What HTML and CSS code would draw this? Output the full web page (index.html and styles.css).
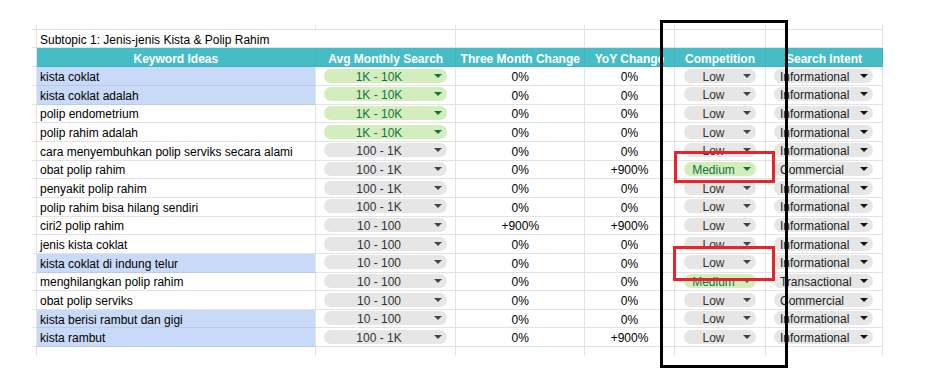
FILE: index.html
```html
<!DOCTYPE html>
<html>
<head>
<meta charset="utf-8">
<link rel="stylesheet" href="styles.css">
</head>
<body>
<div class="page">
  <div class="sheet">
    <div class="row top"><div class="c a"></div><div class="c b"></div><div class="c"></div><div class="c"></div><div class="c"></div><div class="c"></div><div class="c"></div></div>
    <div class="row sub"><div class="c a"></div><div class="c b nob">Subtopic 1: Jenis-jenis Kista &amp; Polip Rahim</div><div class="c"></div><div class="c"></div><div class="c"></div><div class="c"></div><div class="c"></div></div>
    <div class="row head"><div class="c a"></div><div class="c h">Keyword Ideas</div><div class="c h">Avg Monthly Search</div><div class="c h">Three Month Change</div><div class="c h">YoY Change</div><div class="c h">Competition</div><div class="c h">Search Intent</div></div>

    <div class="row d"><div class="c a"></div><div class="c b hl">kista coklat</div><div class="c"><span class="chip g vol"><span class="t">1K - 10K</span><i></i></span></div><div class="c n">0%</div><div class="c n">0%</div><div class="c"><span class="chip comp"><span class="t">Low</span><i></i></span></div><div class="c"><span class="chip intent"><span class="t">Informational</span><i></i></span></div></div>
    <div class="row d"><div class="c a"></div><div class="c b hl">kista coklat adalah</div><div class="c"><span class="chip g vol"><span class="t">1K - 10K</span><i></i></span></div><div class="c n">0%</div><div class="c n">0%</div><div class="c"><span class="chip comp"><span class="t">Low</span><i></i></span></div><div class="c"><span class="chip intent"><span class="t">Informational</span><i></i></span></div></div>
    <div class="row d"><div class="c a"></div><div class="c b">polip endometrium</div><div class="c"><span class="chip g vol"><span class="t">1K - 10K</span><i></i></span></div><div class="c n">0%</div><div class="c n">0%</div><div class="c"><span class="chip comp"><span class="t">Low</span><i></i></span></div><div class="c"><span class="chip intent"><span class="t">Informational</span><i></i></span></div></div>
    <div class="row d"><div class="c a"></div><div class="c b">polip rahim adalah</div><div class="c"><span class="chip g vol"><span class="t">1K - 10K</span><i></i></span></div><div class="c n">0%</div><div class="c n">0%</div><div class="c"><span class="chip comp"><span class="t">Low</span><i></i></span></div><div class="c"><span class="chip intent"><span class="t">Informational</span><i></i></span></div></div>
    <div class="row d"><div class="c a"></div><div class="c b">cara menyembuhkan polip serviks secara alami</div><div class="c"><span class="chip vol"><span class="t">100 - 1K</span><i></i></span></div><div class="c n">0%</div><div class="c n">0%</div><div class="c"><span class="chip comp"><span class="t">Low</span><i></i></span></div><div class="c"><span class="chip intent"><span class="t">Informational</span><i></i></span></div></div>
    <div class="row d"><div class="c a"></div><div class="c b">obat polip rahim</div><div class="c"><span class="chip vol"><span class="t">100 - 1K</span><i></i></span></div><div class="c n">0%</div><div class="c n">+900%</div><div class="c"><span class="chip g comp"><span class="t">Medium</span><i></i></span></div><div class="c"><span class="chip intent"><span class="t">Commercial</span><i></i></span></div></div>
    <div class="row d"><div class="c a"></div><div class="c b">penyakit polip rahim</div><div class="c"><span class="chip vol"><span class="t">100 - 1K</span><i></i></span></div><div class="c n">0%</div><div class="c n">0%</div><div class="c"><span class="chip comp"><span class="t">Low</span><i></i></span></div><div class="c"><span class="chip intent"><span class="t">Informational</span><i></i></span></div></div>
    <div class="row d"><div class="c a"></div><div class="c b">polip rahim bisa hilang sendiri</div><div class="c"><span class="chip vol"><span class="t">100 - 1K</span><i></i></span></div><div class="c n">0%</div><div class="c n">0%</div><div class="c"><span class="chip comp"><span class="t">Low</span><i></i></span></div><div class="c"><span class="chip intent"><span class="t">Informational</span><i></i></span></div></div>
    <div class="row d"><div class="c a"></div><div class="c b">ciri2 polip rahim</div><div class="c"><span class="chip vol"><span class="t">10 - 100</span><i></i></span></div><div class="c n">+900%</div><div class="c n">+900%</div><div class="c"><span class="chip comp"><span class="t">Low</span><i></i></span></div><div class="c"><span class="chip intent"><span class="t">Informational</span><i></i></span></div></div>
    <div class="row d"><div class="c a"></div><div class="c b">jenis kista coklat</div><div class="c"><span class="chip vol"><span class="t">10 - 100</span><i></i></span></div><div class="c n">0%</div><div class="c n">0%</div><div class="c"><span class="chip comp"><span class="t">Low</span><i></i></span></div><div class="c"><span class="chip intent"><span class="t">Informational</span><i></i></span></div></div>
    <div class="row d"><div class="c a"></div><div class="c b hl">kista coklat di indung telur</div><div class="c"><span class="chip vol"><span class="t">10 - 100</span><i></i></span></div><div class="c n">0%</div><div class="c n">0%</div><div class="c"><span class="chip comp"><span class="t">Low</span><i></i></span></div><div class="c"><span class="chip intent"><span class="t">Informational</span><i></i></span></div></div>
    <div class="row d"><div class="c a"></div><div class="c b">menghilangkan polip rahim</div><div class="c"><span class="chip vol"><span class="t">10 - 100</span><i></i></span></div><div class="c n">0%</div><div class="c n">0%</div><div class="c"><span class="chip g comp"><span class="t">Medium</span><i></i></span></div><div class="c"><span class="chip intent"><span class="t">Transactional</span><i></i></span></div></div>
    <div class="row d"><div class="c a"></div><div class="c b">obat polip serviks</div><div class="c"><span class="chip vol"><span class="t">10 - 100</span><i></i></span></div><div class="c n">0%</div><div class="c n">0%</div><div class="c"><span class="chip comp"><span class="t">Low</span><i></i></span></div><div class="c"><span class="chip intent"><span class="t">Commercial</span><i></i></span></div></div>
    <div class="row d"><div class="c a"></div><div class="c b hl">kista berisi rambut dan gigi</div><div class="c"><span class="chip vol"><span class="t">10 - 100</span><i></i></span></div><div class="c n">0%</div><div class="c n">0%</div><div class="c"><span class="chip comp"><span class="t">Low</span><i></i></span></div><div class="c"><span class="chip intent"><span class="t">Informational</span><i></i></span></div></div>
    <div class="row d"><div class="c a"></div><div class="c b hl">kista rambut</div><div class="c"><span class="chip vol"><span class="t">100 - 1K</span><i></i></span></div><div class="c n">0%</div><div class="c n">+900%</div><div class="c"><span class="chip comp"><span class="t">Low</span><i></i></span></div><div class="c"><span class="chip intent"><span class="t">Informational</span><i></i></span></div></div>

    <div class="row end"><div class="c a"></div><div class="c b"></div><div class="c"></div><div class="c"></div><div class="c"></div><div class="c"></div><div class="c"></div></div>
  </div>

  <div class="mark black"></div>
  <div class="mark red r1"></div>
  <div class="mark red r2"></div>
</div>
</body>
</html>
```

FILE: styles.css
```css
* { box-sizing: border-box; }
html, body { margin: 0; padding: 0; background: #fff; }
body {
  font-family: "Liberation Sans", Arial, sans-serif;
  font-size: 12px;
  color: #000;
}
.page {
  position: relative;
  width: 930px;
  height: 379px;
  overflow: hidden;
}
.sheet {
  display: flex;
  flex-direction: column;
  padding-top: 25px;
  padding-left: 32px;
}
.row {
  display: grid;
  grid-template-columns: 4.7px 279.3px 140.5px 128.5px 90px 91px 117px;
  height: 18.67px;
}
.row.top { height: 5px; }
.row.sub { height: 18.3px; }
.row.head { height: 19px; }
.row.end { height: 9px; }
.row.end .c { border-bottom: none; }
.c {
  border-right: 1px solid #e3e3e3;
  border-bottom: 1px solid #e3e3e3;
  display: flex;
  align-items: center;
  justify-content: center;
  white-space: nowrap;
  overflow: visible;
  min-width: 0;
  line-height: 14px;
}
.c.b {
  justify-content: flex-start;
  padding-left: 3.3px;
  padding-top: 2px;
}
.c.n { padding-top: 2px; }
.c.nob { border-right: none; }
.c.hl { background: #c9daf8; border-bottom-color: #b9cbe9; }
.row.head .c.h {
  background: #46bdc6;
  color: #fff;
  font-weight: bold;
  padding-top: 3px;
  border-right: 1px solid #42b6bf;
  border-bottom: 1px solid #3fb2ba;
}

.chip {
  display: flex;
  align-items: center;
  height: 14px;
  border-radius: 7px;
  background: #e6e6e6;
  color: #333;
  width: 100%;
  margin-top: -1px;
}
.chip .t { flex: 1; text-align: center; position: relative; top: 1px; }
.chip i {
  display: block;
  width: 0;
  height: 0;
  border-left: 4px solid transparent;
  border-right: 4px solid transparent;
  border-top: 4px solid #444;
}
.chip.g { background: #d4edbc; color: #11734b; }
.chip.g i { border-top-color: #11734b; }
.chip.vol { margin-left: 8px; margin-right: 8.5px; padding-right: 5px; }
.chip.comp { margin-left: 9px; margin-right: 9px; padding-right: 5px; }
.chip.intent {
  margin-left: 8px;
  margin-right: 9px;
  padding: 0 5px 0 6px;
  color: #222;
}
.chip.intent .t { text-align: left; }
.chip.intent i { border-top-color: #111; }

.mark { position: absolute; pointer-events: none; }
.black {
  left: 660px;
  top: 20px;
  width: 128px;
  height: 348px;
  border: 3px solid #000;
}
.red { border: 3px solid #e8232b; }
.r1 { left: 674px; top: 151px; width: 101px; height: 32px; }
.r2 { left: 672.5px; top: 246px; width: 102.5px; height: 35px; }
```
